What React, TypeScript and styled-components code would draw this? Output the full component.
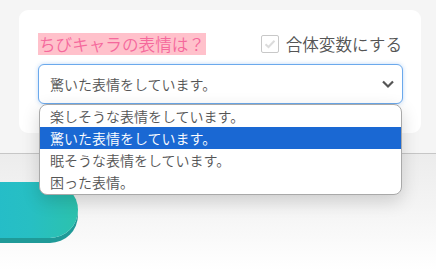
import React from 'react';
import styled, { createGlobalStyle } from 'styled-components';

const GlobalStyle = createGlobalStyle`
  html, body {
    margin: 0;
    padding: 0;
  }

  body {
    width: 436px;
    height: 270px;
    overflow: hidden;
    background: #f5f5f5;
    font-family: 'Noto Sans CJK JP', 'Noto Sans', sans-serif;
    font-weight: 350;
  }
`;

const Page = styled.div`
  display: flex;
  flex-direction: column;
  height: 270px;
`;

const TopArea = styled.section`
  height: 153px;
  box-sizing: border-box;
  padding: 10px 15px 0 19px;
`;

const Card = styled.div`
  display: flex;
  flex-direction: column;
  gap: 9px;

  width: 402px;
  box-sizing: border-box;
  padding: 23px 18px 29px 19px;

  border-radius: 9px;
  background: #ffffff;
`;

const HeaderRow = styled.div`
  display: flex;
  align-items: center;
  justify-content: space-between;
  height: 22px;
`;

const Question = styled.span`
  display: inline-block;
  height: 22px;
  line-height: 22px;
  padding: 0 1px;

  font-size: 16.6px;
  color: #f5689c;
  background: #ffc1cb;
`;

const CheckLabel = styled.label`
  display: flex;
  align-items: center;
  gap: 7px;
  margin-right: 1px;

  font-size: 16.6px;
  color: #555555;
`;

const CheckBox = styled.span`
  display: flex;
  align-items: center;
  justify-content: center;

  width: 16px;
  height: 16px;
  border: 1px solid #c8c8c8;
  border-radius: 2px;
  background: #fff;
`;

const SelectWrap = styled.div`
  position: relative;
`;

const SelectBox = styled.div`
  display: flex;
  align-items: center;
  justify-content: space-between;

  height: 40px;
  box-sizing: border-box;
  padding: 0 6px 0 11px;

  border: 1px solid #6ba9ec;
  border-radius: 6px;
  box-shadow: 0 0 4px rgba(110, 170, 240, 0.45);
  background: #fff;

  font-size: 14px;
  color: #555555;
`;

const OptionList = styled.ul`
  position: absolute;
  top: 40px;
  left: 1px;
  right: 1px;
  z-index: 5;

  margin: 0;
  padding: 0 0 1px;
  list-style: none;

  border: 1px solid #a9a9a9;
  border-radius: 8px;
  background: #fff;
  box-shadow: 0 6px 18px rgba(0, 0, 0, 0.16);
  overflow: hidden;
`;

const OptionItem = styled.li<{ $selected?: boolean }>`
  height: 22px;
  line-height: 22px;
  padding-left: 10px;

  font-size: 14px;
  color: ${(props) => (props.$selected ? '#ffffff' : '#555555')};
  background: ${(props) => (props.$selected ? '#1a68d3' : 'transparent')};
`;

const BottomArea = styled.section`
  flex: 1;
  border-top: 1px solid #c6c6c6;
  padding-top: 28px;
  background: linear-gradient(to bottom, #ececec 0%, #f4f4f4 45%, #ffffff 100%);
`;

const TealButton = styled.div`
  width: 118px;
  height: 56px;
  margin-left: -40px;

  border-radius: 0 28px 28px 0;
  background: linear-gradient(to right, #23bbcd 0%, #27bfc3 60%, #2cc2ad 100%);
  box-shadow: 0 5px 0 #1f9a98;
`;

const options = [
  '楽しそうな表情をしています。',
  '驚いた表情をしています。',
  '眠そうな表情をしています。',
  '困った表情。',
];

function App() {
  const selected = 1;
  return (
    <Page>
      <GlobalStyle />
      <TopArea>
        <Card>
          <HeaderRow>
            <Question>ちびキャラの表情は？</Question>
            <CheckLabel>
              <CheckBox>
                <svg width="12" height="10" viewBox="0 0 12 10">
                  <path
                    d="M1.5 5.2 L4.5 8 L10.5 1.8"
                    fill="none"
                    stroke="#dcdcdc"
                    strokeWidth="2"
                  />
                </svg>
              </CheckBox>
              合体変数にする
            </CheckLabel>
          </HeaderRow>
          <SelectWrap>
            <SelectBox>
              <span>{options[selected]}</span>
              <svg width="16" height="16" viewBox="0 0 16 16">
                <path
                  d="M3 5.5 L8 10.5 L13 5.5"
                  fill="none"
                  stroke="#555"
                  strokeWidth="2.2"
                />
              </svg>
            </SelectBox>
            <OptionList>
              {options.map((text, i) => (
                <OptionItem key={text} $selected={i === selected}>
                  {text}
                </OptionItem>
              ))}
            </OptionList>
          </SelectWrap>
        </Card>
      </TopArea>
      <BottomArea>
        <TealButton />
      </BottomArea>
    </Page>
  );
}

export default App;
